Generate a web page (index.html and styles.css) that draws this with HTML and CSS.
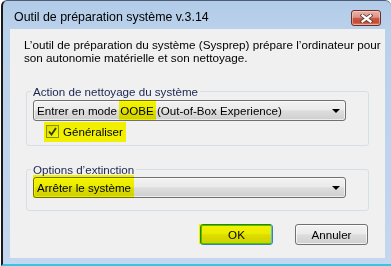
FILE: index.html
```html
<!DOCTYPE html>
<html>
  <head>
    <title>Outil de préparation système v.3.14</title>
    <link rel="stylesheet" href="styles.css">
  </head>
  <body>
    <div class="window">
      <div class="titlebar">
        <span class="title">Outil de préparation système v.3.14</span>
        <span class="close-btn">
          <svg width="13" height="9" viewBox="0 0 13 9">
            <path d="M2.5 1.5 L10.5 7.5 M10.5 1.5 L2.5 7.5" stroke="#5b3a36" stroke-width="4" stroke-linecap="square" fill="none"/>
            <path d="M2.5 1.5 L10.5 7.5 M10.5 1.5 L2.5 7.5" stroke="#ffffff" stroke-width="2.2" stroke-linecap="square" fill="none"/>
          </svg>
        </span>
      </div>
      <div class="client">
        <p class="intro">L’outil de préparation du système (Sysprep) prépare l’ordinateur pour<br>son autonomie matérielle et son nettoyage.</p>

        <fieldset class="group">
          <legend>Action de nettoyage du système</legend>
          <div class="combo">
            <span class="combo-text">Entrer en mode <span class="hl hl-oobe">OOBE</span> (Out-of-Box Experience)</span>
            <span class="arrow"></span>
          </div>
          <label class="check hl hl-check">
            <span class="box">
              <svg width="9" height="9" viewBox="0 0 9 9">
                <path d="M1 4.5 L3.5 7.5 L8 1" stroke="#2a3a62" stroke-width="1.8" fill="none"/>
              </svg>
            </span>
            Généraliser
          </label>
        </fieldset>

        <fieldset class="group group-two">
          <legend>Options d’extinction</legend>
          <div class="combo combo-two">
            <span class="combo-text hl hl-stop">Arrêter le système</span>
            <span class="arrow"></span>
          </div>
        </fieldset>

        <div class="buttons">
          <button class="btn btn-default hl hl-ok">OK</button>
          <button class="btn">Annuler</button>
        </div>
      </div>
    </div>
  </body>
</html>
```

FILE: styles.css
```css
body {
  margin: 0;
  font-family: "Liberation Sans", Arial, sans-serif;
  font-size: 11.6px;
  color: #000;
  background: #fff;
}

.window {
  width: 390px;
  height: 266px;
  margin-left: 1px;
  box-sizing: border-box;
  border-left: 2px solid #1a1a1a;
  border-top: 1px solid #4d5d72;
  border-bottom: 2px solid #38c4e4;
  border-radius: 6px 6px 0 0;
  background: linear-gradient(#b1cbe8, #bad1eb 28px, #c3d7ee);
  padding: 0 6px 6px 7px;
  display: flex;
  flex-direction: column;
}

.titlebar {
  height: 28px;
  display: flex;
  align-items: flex-start;
  justify-content: space-between;
}

.title {
  margin: 9px 0 0 4px;
  font-size: 12.4px;
  line-height: 15px;
  color: #000;
}

.close-btn {
  width: 28px;
  height: 14px;
  margin: 9px 4px 0 0;
  border: 1px solid #6b2e2a;
  border-radius: 3px;
  background: linear-gradient(#e9b3a9, #dc9385 45%, #c95a45 52%, #c44a34 80%, #d7876e);
  box-shadow: inset 0 0 0 1px rgba(255, 220, 210, 0.5);
  display: flex;
  align-items: center;
  justify-content: center;
}

.client {
  height: 229px;
  box-sizing: border-box;
  background: #f0f0f0;
  padding-top: 9px;
}

.intro {
  margin: 0 0 0 14px;
  font-size: 11.7px;
  line-height: 13px;
  white-space: nowrap;
}

.group {
  margin: 21px 16px 0 16px;
  padding: 0 22px 7px 6px;
  border: 1px solid #d5dfe5;
  border-radius: 3px;
}

.group legend {
  padding: 0 2px;
  margin-left: -2px;
  line-height: 13px;
  color: #1b2450;
}

.group-two {
  margin-top: 17px;
  padding-bottom: 12px;
}

.combo {
  height: 21px;
  box-sizing: border-box;
  margin-top: 2px;
  border: 1px solid #707070;
  border-radius: 3px;
  background: linear-gradient(#f2f2f2, #ebebeb 45%, #dddddd 52%, #cfcfcf);
  box-shadow: inset 0 0 0 1px rgba(255, 255, 255, 0.6);
  display: flex;
  align-items: center;
  justify-content: space-between;
  padding: 0 5px 0 3px;
}

.combo-two {
  margin-top: 1px;
}

.arrow {
  width: 0;
  height: 0;
  border-left: 4px solid transparent;
  border-right: 4px solid transparent;
  border-top: 4px solid #000;
}

.check {
  display: flex;
  align-items: center;
  gap: 4px;
  width: max-content;
  height: 13px;
  margin: 4px 0 0 13px;
}

.box {
  width: 11px;
  height: 11px;
  border: 1px solid #8e8f8f;
  background: linear-gradient(135deg, #dcdcdc, #fbfbfb);
  display: flex;
  align-items: center;
  justify-content: center;
}

.buttons {
  display: flex;
  justify-content: flex-end;
  gap: 22px;
  margin: 13px 17px 0 0;
}

.btn {
  width: 73px;
  height: 21px;
  padding: 0;
  font-family: inherit;
  font-size: 11.6px;
  color: #000;
  border: 1px solid #707070;
  border-radius: 3px;
  background: linear-gradient(#f2f2f2, #ebebeb 45%, #dddddd 52%, #cfcfcf);
  box-shadow: inset 0 0 0 1px rgba(255, 255, 255, 0.7);
}

.btn-default {
  border-color: #3c7fb1;
  box-shadow: inset 0 0 0 1px #48c8ee;
}

/* highlighter marks */
.hl {
  position: relative;
}

.hl::after {
  content: "";
  position: absolute;
  background: #ffff00;
  mix-blend-mode: multiply;
  pointer-events: none;
}

.hl-oobe::after {
  top: -4px;
  bottom: -3px;
  left: -1px;
  right: -2px;
}

.hl-check::after {
  top: -3px;
  bottom: -4px;
  left: -2px;
  right: -3px;
}

.hl-stop::after {
  top: -6px;
  bottom: -4px;
  left: -4px;
  right: -3px;
}

.hl-ok::after {
  top: -1px;
  bottom: 0;
  left: -2px;
  right: 1px;
}
```
